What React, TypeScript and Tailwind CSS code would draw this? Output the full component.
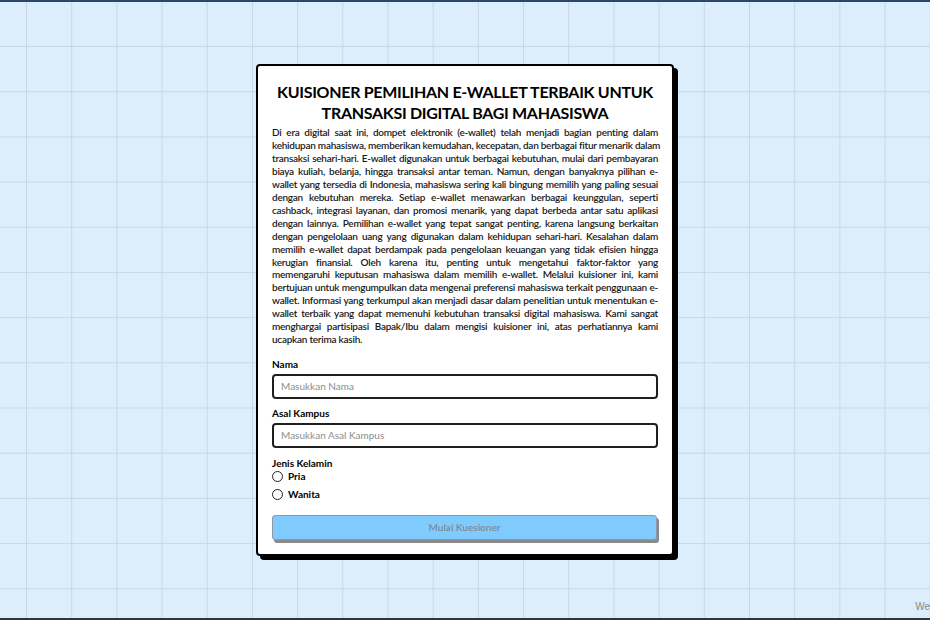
import React from "react";

const lines = [
  "Di era digital saat ini, dompet elektronik (e-wallet) telah menjadi bagian penting dalam",
  "kehidupan mahasiswa, memberikan kemudahan, kecepatan, dan berbagai fitur menarik dalam",
  "transaksi sehari-hari. E-wallet digunakan untuk berbagai kebutuhan, mulai dari pembayaran",
  "biaya kuliah, belanja, hingga transaksi antar teman. Namun, dengan banyaknya pilihan e-",
  "wallet yang tersedia di Indonesia, mahasiswa sering kali bingung memilih yang paling sesuai",
  "dengan kebutuhan mereka. Setiap e-wallet menawarkan berbagai keunggulan, seperti",
  "cashback, integrasi layanan, dan promosi menarik, yang dapat berbeda antar satu aplikasi",
  "dengan lainnya. Pemilihan e-wallet yang tepat sangat penting, karena langsung berkaitan",
  "dengan pengelolaan uang yang digunakan dalam kehidupan sehari-hari. Kesalahan dalam",
  "memilih e-wallet dapat berdampak pada pengelolaan keuangan yang tidak efisien hingga",
  "kerugian finansial. Oleh karena itu, penting untuk mengetahui faktor-faktor yang",
  "memengaruhi keputusan mahasiswa dalam memilih e-wallet. Melalui kuisioner ini, kami",
  "bertujuan untuk mengumpulkan data mengenai preferensi mahasiswa terkait penggunaan e-",
  "wallet. Informasi yang terkumpul akan menjadi dasar dalam penelitian untuk menentukan e-",
  "wallet terbaik yang dapat memenuhi kebutuhan transaksi digital mahasiswa. Kami sangat",
  "menghargai partisipasi Bapak/Ibu dalam mengisi kuisioner ini, atas perhatiannya kami",
  "ucapkan terima kasih.",
];

export default function App() {
  return (
    <div
      className="relative h-[620px] w-[930px] overflow-hidden border-t-2 border-b-2 border-t-[#2d4768] border-b-[#2f3640] bg-[#dcedfc] bg-[linear-gradient(to_right,#c9d7e4_1px,transparent_1px),linear-gradient(to_bottom,#c9d7e4_1px,transparent_1px)] bg-[size:45.2px_45.2px] bg-[position:26px_44px]"
      style={{ fontFamily: "Lato, 'Open Sans', sans-serif" }}
    >
      <div className="flex justify-center pt-[62px]">
        <div className="w-[418px] rounded-[4px] border-2 border-black bg-white px-[14px] pt-[15px] pb-[14px] shadow-[4px_4px_0_#000]">
          <h1 className="text-center text-[16px] leading-[21px] font-bold tracking-[-0.3px] text-black">
            KUISIONER PEMILIHAN E-WALLET TERBAIK UNTUK TRANSAKSI DIGITAL BAGI MAHASISWA
          </h1>
          <p className="mt-[3px] text-[10px] leading-[12.95px] font-semibold tracking-[-0.25px] text-[#1a1a1a]">
            {lines.map((l, i) =>
              i < lines.length - 1 ? (
                <span key={i} className="block whitespace-nowrap text-justify [text-align-last:justify]">
                  {l}
                </span>
              ) : (
                <span key={i} className="block">
                  {l}
                </span>
              )
            )}
          </p>

          <div className="mt-[12px] flex flex-col">
            <label className="text-[10px] leading-[13px] font-bold text-black">Nama</label>
            <input
              className="mt-[2.5px] h-[25px] w-full rounded-[4px] border-2 border-[#1f1f1f] px-[7px] text-[10px] outline-none placeholder:text-[#8c8c8c]"
              placeholder="Masukkan Nama"
            />
            <label className="mt-[8.5px] text-[10px] leading-[13px] font-bold text-black">Asal Kampus</label>
            <input
              className="mt-[2.5px] h-[25px] w-full rounded-[4px] border-2 border-[#1f1f1f] px-[7px] text-[10px] outline-none placeholder:text-[#8c8c8c]"
              placeholder="Masukkan Asal Kampus"
            />
            <span className="mt-[9.5px] text-[10px] leading-[13px] font-bold text-black">Jenis Kelamin</span>
            <div className="flex h-[12px] items-center gap-[5px]">
              <span className="h-[11px] w-[11px] rounded-full border-[1.5px] border-[#222] bg-white" />
              <span className="text-[10px] font-bold text-black">Pria</span>
            </div>
            <div className="mt-[6px] flex h-[12px] items-center gap-[5px]">
              <span className="h-[11px] w-[11px] rounded-full border-[1.5px] border-[#222] bg-white" />
              <span className="text-[10px] font-bold text-black">Wanita</span>
            </div>
            <button className="mt-[15px] h-[25px] w-[385px] rounded-[3px] border border-[#8a9aa8] bg-[#80cbfd] text-[10px] font-semibold text-[#7b8a98] shadow-[2px_3px_0_#8a8a8a]">
              Mulai Kuesioner
            </button>
          </div>
        </div>
      </div>
      <span className="absolute right-0 bottom-[4px] text-[10px] text-[#8a8a8a]" style={{ fontFamily: "'Liberation Sans', sans-serif" }}>
        We
      </span>
    </div>
  );
}
